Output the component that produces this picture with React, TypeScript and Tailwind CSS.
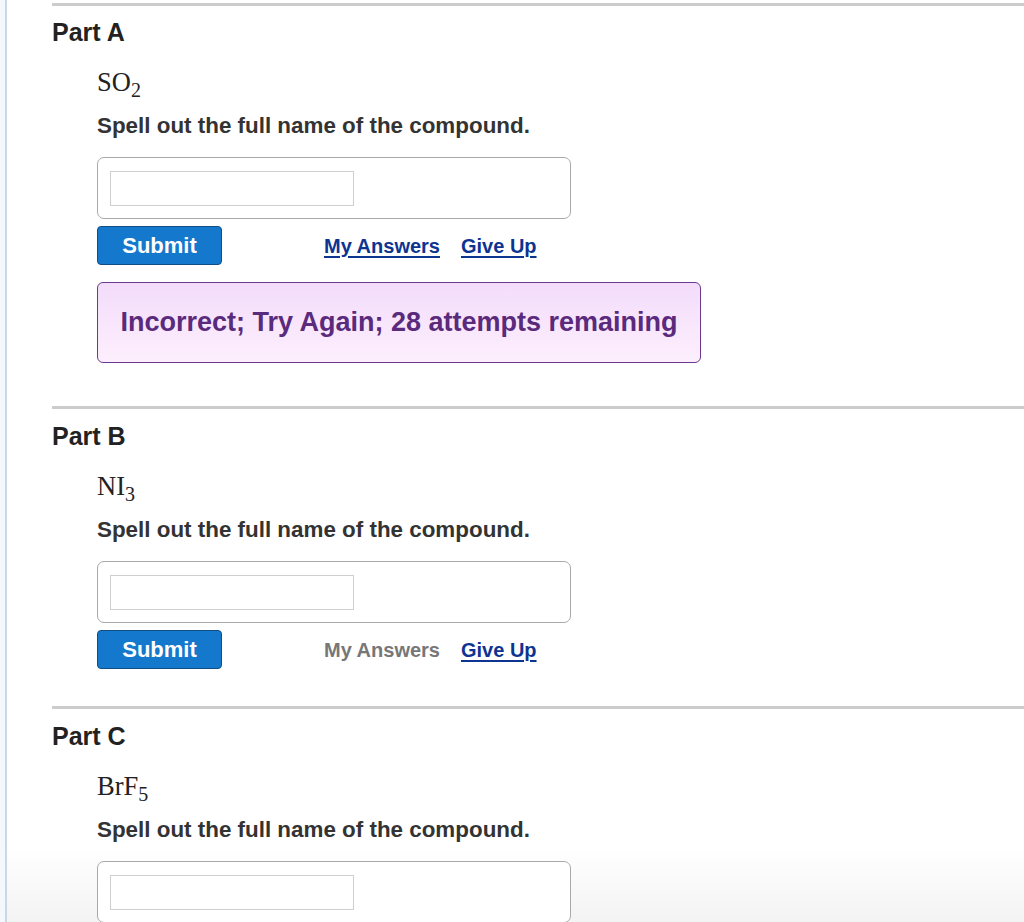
import React from "react";

type Part = {
  label: string;
  formula: React.ReactNode;
  myAnswersActive: boolean;
  feedback?: string;
  showButtons: boolean;
};

const F = ({ base, sub }: { base: string; sub: string }) => (
  <span>
    {base}
    <span className="relative top-[6px] text-[20px]">{sub}</span>
  </span>
);

const parts: Part[] = [
  { label: "Part A", formula: <F base="SO" sub="2" />, myAnswersActive: true, feedback: "Incorrect; Try Again; 28 attempts remaining", showButtons: true },
  { label: "Part B", formula: <F base="NI" sub="3" />, myAnswersActive: false, showButtons: true },
  { label: "Part C", formula: <F base="BrF" sub="5" />, myAnswersActive: false, showButtons: false },
];

function PartSection({ p, first, prevFeedback }: { p: Part; first: boolean; prevFeedback: boolean }) {
  return (
    <div className={first ? "pt-[3px]" : prevFeedback ? "pt-[43px]" : "pt-[37px]"}>
      <div className="h-[3px] bg-[#cccccc]" />
      <div className={`${first ? "mt-[11px]" : "mt-[12px]"} text-[25px] leading-[30px] font-bold text-[#222222]`}>
        {p.label}
      </div>
      <div className="pl-[45px]">
        <div className="mt-[20px] font-['Liberation_Serif',serif] text-[26.5px] leading-[30px] text-[#222222]">
          {p.formula}
        </div>
        <div className="mt-[14px] text-[22.4px] leading-[26px] font-bold text-[#333333]">
          Spell out the full name of the compound.
        </div>
        <div className="mt-[18px] w-[474px] h-[62px] rounded-[7px] border-[1.5px] border-[#a9a9a9] bg-white pl-[12px] pt-[12.5px]">
          <div className="w-[244px] h-[35px] border border-[#cfcfcf] bg-white" />
        </div>
        {p.showButtons && (
          <div className="mt-[7px] flex items-center">
            <button className="w-[125px] h-[39px] rounded-[4px] border border-[#0f4f85] bg-[#1479cc] text-white text-[22px] font-bold leading-none">
              Submit
            </button>
            <span
              className={`ml-[102px] text-[20px] font-bold ${
                p.myAnswersActive ? "text-[#0d3490] underline underline-offset-[3px]" : "text-[#777777]"
              }`}
            >
              My Answers
            </span>
            <span className="ml-[21px] text-[20px] font-bold text-[#0d3490] underline underline-offset-[3px]">
              Give Up
            </span>
          </div>
        )}
        {p.feedback && (
          <div className="mt-[17px] w-[604px] h-[81px] rounded-[6px] border-[1.5px] border-[#6b3a8e] bg-[linear-gradient(to_bottom,#f3dcfb,#fdeffd)] flex items-center justify-center">
            <span className="text-[27px] font-bold text-[#5a2a7c]">{p.feedback}</span>
          </div>
        )}
      </div>
    </div>
  );
}

export default function App() {
  return (
    <div className="w-[1024px] h-[922px] overflow-hidden flex font-['Liberation_Sans',Arial,sans-serif] bg-[linear-gradient(to_bottom,#ffffff_92%,#f3f3f3)]">
      <div className="w-[5px] bg-[#f4f7fb]" />
      <div className="w-[2px] bg-[#c8d7ea]" />
      <div className="flex-1 pl-[45px]">
        {parts.map((p, i) => (
          <PartSection key={p.label} p={p} first={i === 0} prevFeedback={i > 0 && !!parts[i - 1].feedback} />
        ))}
      </div>
    </div>
  );
}
